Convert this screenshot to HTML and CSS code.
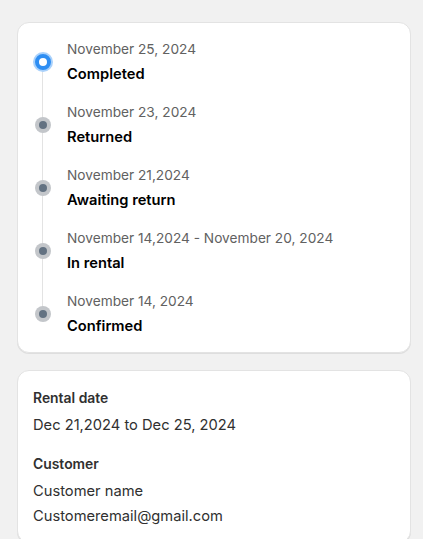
FILE: index.html
```html
<!DOCTYPE html>
<html lang="en">
<head>
    <meta charset="UTF-8">
    <meta name="viewport" content="width=device-width, initial-scale=1.0">
    <title>Rental order</title>
    <link rel="stylesheet" href="styles.css">
</head>
<body>

<!-- Status timeline -->
<div class="card">
    <ul class="timeline">
        <li class="step current">
            <span class="dot"></span>
            <div class="step-text">
                <div class="step-date">November 25, 2024</div>
                <div class="step-title">Completed</div>
            </div>
        </li>
        <li class="step">
            <span class="dot"></span>
            <div class="step-text">
                <div class="step-date">November 23, 2024</div>
                <div class="step-title">Returned</div>
            </div>
        </li>
        <li class="step">
            <span class="dot"></span>
            <div class="step-text">
                <div class="step-date">November 21,2024</div>
                <div class="step-title">Awaiting return</div>
            </div>
        </li>
        <li class="step">
            <span class="dot"></span>
            <div class="step-text">
                <div class="step-date">November 14,2024 - November 20, 2024</div>
                <div class="step-title">In rental</div>
            </div>
        </li>
        <li class="step">
            <span class="dot"></span>
            <div class="step-text">
                <div class="step-date">November 14, 2024</div>
                <div class="step-title">Confirmed</div>
            </div>
        </li>
    </ul>
</div>

<!-- Details -->
<div class="card details">
    <div class="field">
        <div class="label">Rental date</div>
        <div class="value">Dec 21,2024 to Dec 25, 2024</div>
    </div>
    <div class="field">
        <div class="label">Customer</div>
        <div class="value">Customer name</div>
        <div class="value">Customeremail@gmail.com</div>
    </div>
</div>

</body>
</html>
```

FILE: styles.css
```css
body {
    font-family: Inter, "Noto Sans", sans-serif;
    background: #f1f1f1;
    margin: 0;
    padding: 22px 12px 0 17px;
    color: #303030;
}
.card {
    background: #fff;
    border: 1px solid #e3e3e3;
    border-radius: 12px;
    box-shadow: 0 1px 0 rgba(0,0,0,0.08);
    padding: 16px;
    margin-bottom: 17px;
}
.timeline {
    list-style: none;
    margin: 0;
    padding: 0;
    position: relative;
    display: flex;
    flex-direction: column;
    gap: 18px;
}
.timeline::before {
    content: "";
    position: absolute;
    left: 8px;
    top: 22px;
    bottom: 22px;
    width: 1px;
    background: #e3e3e3;
}
.step {
    display: flex;
    align-items: center;
    gap: 15px;
}
.dot {
    position: relative;
    width: 16px;
    height: 16px;
    margin: 0 1px;
    border-radius: 50%;
    background: #c3c6ca;
    display: flex;
    align-items: center;
    justify-content: center;
    flex-shrink: 0;
}
.dot::after {
    content: "";
    width: 8px;
    height: 8px;
    border-radius: 50%;
    background: #637282;
}
.current .dot {
    background: #fff;
    border: 4px solid #2e8ef3;
    box-sizing: border-box;
    box-shadow: 0 0 0 2px #a9d1fb;
}
.current .dot::after {
    display: none;
}
.step-text {
    display: flex;
    flex-direction: column;
    gap: 5px;
}
.step-date {
    font-size: 13.7px;
    line-height: 20px;
    color: #616161;
}
.step-title {
    font-size: 14.7px;
    line-height: 20px;
    font-weight: 600;
    color: #000;
}
.details {
    padding: 17px 15px 16px;
    display: flex;
    flex-direction: column;
    gap: 19px;
}
.field {
    display: flex;
    flex-direction: column;
    gap: 5px;
}
.label {
    font-size: 13.9px;
    line-height: 20px;
    font-weight: 600;
    color: #303030;
    margin-bottom: 2px;
}
.value {
    font-size: 14.7px;
    line-height: 20px;
    color: #303030;
}
```
